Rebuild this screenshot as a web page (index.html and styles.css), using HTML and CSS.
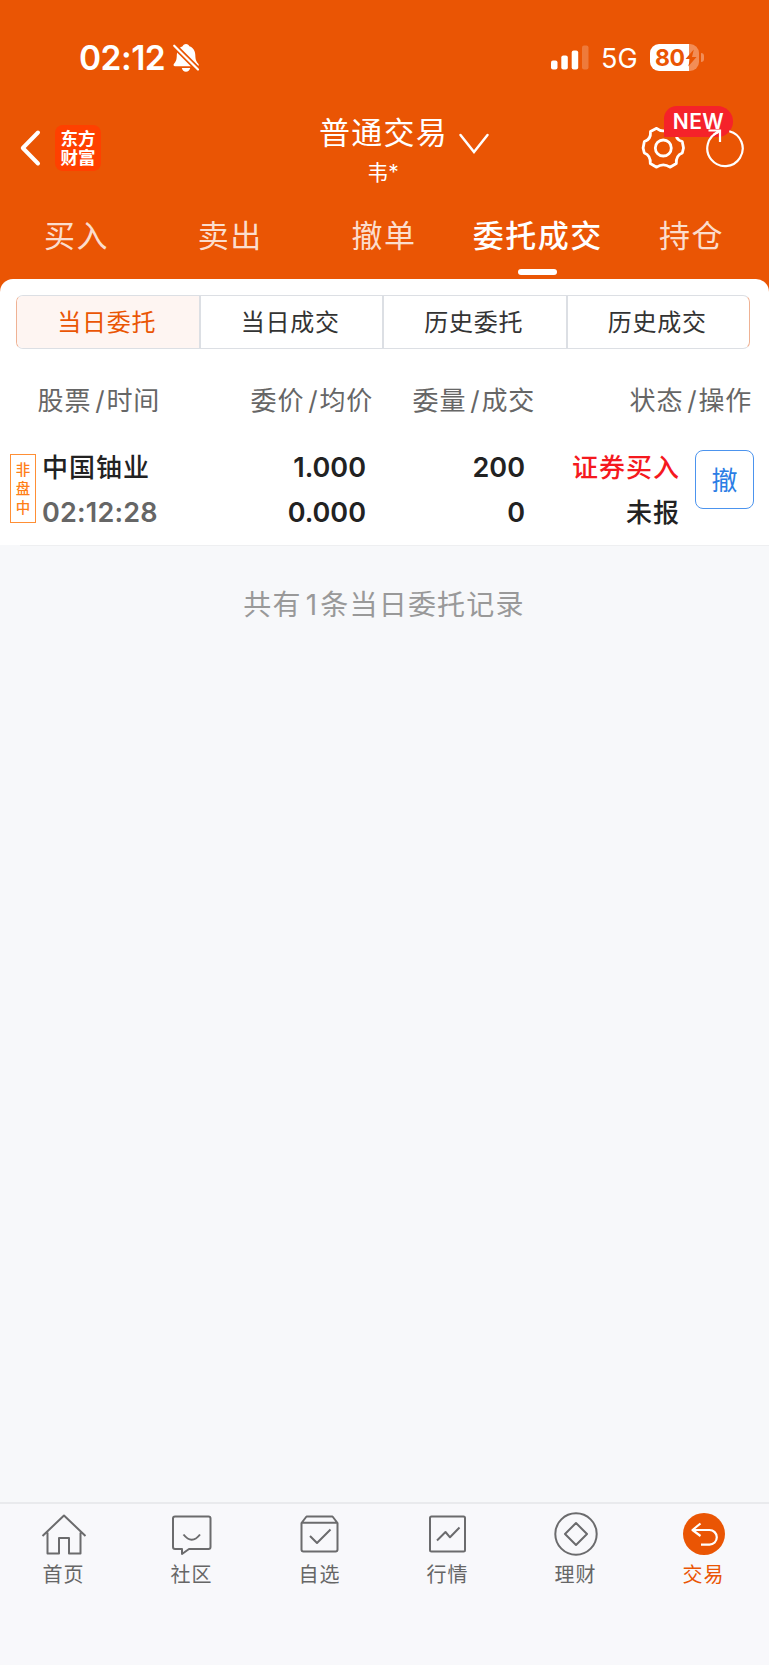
FILE: index.html
```html
<!DOCTYPE html>
<html lang="zh-CN">
<head>
    <meta charset="UTF-8">
    <meta name="viewport" content="width=device-width, initial-scale=1.0">
    <title>普通交易</title>
    <link rel="stylesheet" href="styles.css">
</head>
<body>
    <div class="app">
        <header class="header">
            <div class="status-bar">
                <span class="time">02:12</span>
                <svg class="icon-bell" width="28" height="30" viewBox="0 0 28 30">
                    <path fill="#fff" d="M14 1c1.8 0 3 1 3.400 2.300 3.700 1.300 5.800 4.400 5.900 8.700.1 5.100 1.100 6.600 3 8.700.9 1 .4 2.500-1 2.500H3c-1.400 0-1.900-1.500-1-2.500 1.900-2.100 2.700-3.600 2.800-8.700.1-4.300 2-7.400 5.800-8.700C11 2 12.200 1 14 1zM9.800 25h8.400c-.5 2.300-2.100 3.700-4.200 3.700S10.300 27.300 9.800 25z"/>
                    <path stroke="#ea5504" stroke-width="5.500" d="M0 0.500L28 28.500"/>
                    <path stroke="#fff" stroke-width="2.200" stroke-linecap="round" d="M2.200 2.700L26 26.500"/>
                </svg>
                <svg class="icon-signal" width="38" height="25" viewBox="0 0 38 25">
                    <g fill="#fff">
                        <rect x="0" y="15.500" width="6.500" height="9" rx="2"/>
                        <rect x="10.300" y="10.500" width="6.500" height="14" rx="2"/>
                        <rect x="20.700" y="5.500" width="6.500" height="19" rx="2"/>
                        <rect x="31" y="0.500" width="6.500" height="24" rx="2" opacity="0.22"/>
                    </g>
                </svg>
                <span class="network">5G</span>
                <div class="battery">
                    <span class="battery-level">80</span>
                    <svg width="12" height="18" viewBox="0 0 12 18"><path fill="#ea5504" d="M8.800.5L.5 10h4.600L3.200 17.500 11.500 8H7z"/></svg>
                </div>
                <span class="battery-cap"></span>
            </div>

            <div class="nav-bar">
                <svg class="icon-back" width="22" height="38" viewBox="0 0 22 38"><path fill="none" stroke="#fff" stroke-width="4" stroke-linecap="round" stroke-linejoin="round" d="M19 3.500L3.800 19 19 34.500"/></svg>
                <div class="logo"><span>东方</span><span>财富</span></div>
                <div class="account">
                    <h1 class="account-title">普通交易</h1>
                    <span class="account-name">韦*</span>
                </div>
                <svg class="icon-down" width="32" height="22" viewBox="0 0 32 22"><path fill="none" stroke="#fff" stroke-width="2.500" stroke-linecap="round" d="M2.500 2L16 19 29.500 2"/></svg>
                <div class="settings">
                    <svg width="44" height="44" viewBox="0 0 44 44" fill="none" stroke="#fff" stroke-width="2.800" stroke-linejoin="round">
                        <circle cx="22.300" cy="22" r="8"/>
                        <path d="M15.600 2.300Q22.300 7.500 29 2.300L35.100 5.500Q33.800 13.500 41.300 15.700L42.500 22L41.300 27Q34.800 29.500 35.300 37.500L29 41.200Q22.300 36.500 15.600 41.200L9.300 37.500Q9.800 29.500 3.300 27L2.100 22L3.300 15.700Q10.100 13.500 9.500 5.500Z"/>
                    </svg>
                    <span class="badge">NEW</span>
                </div>
                <svg class="icon-refresh" width="40" height="42" viewBox="0 0 40 42" fill="none" stroke="#fff" stroke-width="2.200">
                    <path d="M24.300 5.200A17.700 17.700 0 1 1 13.500 5.900"/>
                    <path d="M3.500 4.500H15V16M15 4.500L8.500 8.800"/>
                </svg>
            </div>

            <nav class="tabs">
                <a class="tab">买入</a>
                <a class="tab">卖出</a>
                <a class="tab">撤单</a>
                <a class="tab active">委托成交</a>
                <a class="tab">持仓</a>
            </nav>
        </header>

        <section class="panel">
            <div class="segments">
                <a class="segment active">当日委托</a>
                <a class="segment">当日成交</a>
                <a class="segment">历史委托</a>
                <a class="segment">历史成交</a>
            </div>

            <div class="list-head">
                <span>股票<i>/</i>时间</span>
                <span>委价<i>/</i>均价</span>
                <span>委量<i>/</i>成交</span>
                <span>状态<i>/</i>操作</span>
            </div>

            <div class="order">
                <div class="order-tag"><span>非</span><span>盘</span><span>中</span></div>
                <div class="cell stock">
                    <span>中国铀业</span>
                    <span class="num muted">02:12:28</span>
                </div>
                <div class="cell price">
                    <span class="num">1.000</span>
                    <span class="num">0.000</span>
                </div>
                <div class="cell amount">
                    <span class="num">200</span>
                    <span class="num">0</span>
                </div>
                <div class="cell state">
                    <span class="buy">证券买入</span>
                    <span>未报</span>
                </div>
                <button class="cancel-btn">撤</button>
            </div>
        </section>

        <main class="content">
            <p class="summary">共有<span class="count">1</span>条当日委托记录</p>
        </main>

        <footer class="tab-bar">
            <a class="bar-item">
                <svg width="46" height="46" viewBox="0 0 46 46"><path d="M1.500 26L23 5.500 44.500 26M6.500 22.500V43.500H18V28H28V43.500H39.500V22.500"/></svg>
                <span>首页</span>
            </a>
            <a class="bar-item">
                <svg width="46" height="46" viewBox="0 0 46 46"><path d="M6 6.500H39.500Q41.500 6.500 41.500 8.500V37Q41.500 39 39.500 39H20L13 44V39H6Q4 39 4 37V8.500Q4 6.500 6 6.500zM14.500 24.500Q22.800 35 31 24.500"/></svg>
                <span>社区</span>
            </a>
            <a class="bar-item">
                <svg width="46" height="46" viewBox="0 0 46 46"><path d="M4.500 13L9.500 6.500H35.500L40.500 13V39.500Q40.500 41.500 38.500 41.500H6.500Q4.500 41.500 4.500 39.500zM4.500 12.800H40.500M13 26L20 33 33.500 19.500"/></svg>
                <span>自选</span>
            </a>
            <a class="bar-item">
                <svg width="46" height="46" viewBox="0 0 46 46"><rect x="5" y="6.500" width="35" height="35" rx="1.500"/><path d="M12 30.500L20.500 22 25 27.300 34.500 17.500"/></svg>
                <span>行情</span>
            </a>
            <a class="bar-item">
                <svg width="46" height="46" viewBox="0 0 46 46"><circle cx="23" cy="24" r="20.700"/><path d="M23 13L34 24 23 35 12 24z"/></svg>
                <span>理财</span>
            </a>
            <a class="bar-item active">
                <svg width="46" height="46" viewBox="0 0 46 46"><circle class="disc" cx="23" cy="24" r="21"/><path d="M19.500 13.500L11.500 20 19.500 26M12 20H28.500A7.300 7.300 0 0 1 28.500 34.600H20"/></svg>
                <span>交易</span>
            </a>
        </footer>
    </div>
</body>
</html>
```
FILE: styles.css
```css
* {
    box-sizing: border-box;
}

body {
    margin: 0;
    font-family: Inter, "Noto Sans CJK SC", sans-serif;
    color: #222;
    background-color: #f7f8fa;
}

.app {
    display: flex;
    flex-direction: column;
    width: 769px;
    height: 1665px;
    overflow: hidden;
    background-color: #f7f8fa;
}

/* Header */
.header {
    height: 292px;
    margin-bottom: -13px;
    flex-shrink: 0;
    background-color: #ea5504;
    color: #fff;
}

.status-bar {
    display: flex;
    align-items: center;
    height: 115px;
    padding-left: 79px;
}

.time {
    width: 93px;
    font-size: 33.5px;
    font-weight: 600;
    letter-spacing: -0.5px;
    line-height: 40px;
}

.icon-signal {
    margin-left: 351px;
}

.network {
    width: 48px;
    margin: 2px 0 0 12px;
    font-size: 27px;
    line-height: 32px;
}

.battery {
    display: flex;
    align-items: center;
    width: 49px;
    height: 27px;
    margin-left: 1px;
    padding-left: 5px;
    border-radius: 9px;
    background: linear-gradient(90deg, #fff 39px, #f28d57 39px);
}

.battery-level {
    width: 30px;
    font-size: 23px;
    font-weight: 700;
    line-height: 27px;
    letter-spacing: -0.4px;
    margin-top: 1px;
    color: #ea5504;
}

.battery-cap {
    width: 3px;
    height: 9px;
    margin-left: 2px;
    border-radius: 0 4px 4px 0;
    background-color: #f28d57;
}

.nav-bar {
    display: flex;
    align-items: flex-start;
    height: 85px;
    padding-left: 19px;
}

.icon-back {
    margin-top: 14px;
}

.logo {
    display: flex;
    flex-direction: column;
    align-items: center;
    width: 46px;
    height: 46px;
    margin: 10px 0 0 14px;
    padding-top: 4px;
    border-radius: 8px;
    background-color: #ff4000;
    font-size: 17.5px;
    font-weight: 700;
    line-height: 19px;
}

.account {
    display: flex;
    flex-direction: column;
    align-items: center;
    width: 132px;
    margin-left: 217px;
}

.account-title {
    margin: 0 0 0 -1px;
    font-size: 31px;
    font-weight: 400;
    letter-spacing: 1.3px;
    line-height: 36px;
}

.account-name {
    margin: 10px 0 0 -2px;
    font-size: 21px;
    line-height: 24px;
}

.icon-down {
    margin: 18px 0 0 8px;
}

.settings {
    position: relative;
    width: 44px;
    height: 44px;
    margin: 11px 0 0 151px;
}

.badge {
    position: absolute;
    left: 23px;
    top: -20px;
    width: 69px;
    height: 31px;
    border-radius: 13px 16px 16px 0;
    background-color: #f5222a;
    font-size: 21px;
    font-weight: 600;
    letter-spacing: 0.5px;
    line-height: 31px;
    text-align: center;
}

.icon-refresh {
    position: relative;
    margin: 11px 0 0 20px;
}

.tabs {
    display: flex;
    height: 79px;
}

.tab {
    position: relative;
    flex: 1;
    font-size: 31px;
    letter-spacing: 1.5px;
    line-height: 72px;
    text-align: center;
    text-indent: -1px;
    color: #fbddcd;
}

.tab.active {
    font-weight: 500;
    color: #fff;
}

.tab.active::after {
    content: "";
    position: absolute;
    left: 57px;
    bottom: 4px;
    width: 39px;
    height: 6px;
    border-radius: 3px;
    background-color: #fff;
}

/* Order list */
.panel {
    position: relative;
    height: 266px;
    padding-top: 16px;
    flex-shrink: 0;
    border-radius: 13px 13px 0 0;
    background-color: #fff;
}

.segments {
    display: flex;
    width: 734px;
    height: 54px;
    margin-left: 16px;
    border: 1.500px solid #dcdfe4;
    border-left-color: #efb294;
    border-right-color: #efb294;
    border-radius: 7px;
    overflow: hidden;
}

.segment {
    flex: 1;
    font-size: 24px;
    letter-spacing: 0.8px;
    line-height: 54px;
    text-align: center;
    text-indent: -2px;
    color: #333;
}

.segment + .segment {
    border-left: 2px solid #dcdfe4;
}

.segment.active {
    color: #ea5504;
    background-color: #fef5f2;
}

.list-head {
    display: grid;
    grid-template-columns: 160px 213px 162px 217px;
    height: 100px;
    font-size: 26px;
    letter-spacing: 0.8px;
    line-height: 103px;
    text-align: right;
    color: #666;
}

.list-head i {
    margin: 0 1px 0 4px;
    font-style: normal;
}

.order {
    display: flex;
    align-items: flex-start;
    padding-left: 10px;
    margin-top: -4px;
}

.order-tag {
    display: flex;
    flex-direction: column;
    align-items: center;
    width: 26px;
    height: 69px;
    margin-top: 9px;
    padding-top: 5px;
    border: 1px solid #ff8f35;
    font-size: 14.5px;
    font-weight: 500;
    line-height: 19px;
    color: #ff7f17;
}

.cell {
    display: flex;
    flex-direction: column;
    font-size: 26px;
    font-weight: 500;
    letter-spacing: 1px;
    line-height: 45px;
    text-align: right;
}

.num {
    font-size: 27px;
    font-weight: 600;
    letter-spacing: 0;
}

.muted {
    letter-spacing: 0.2px;
    color: #666;
}

.stock {
    width: 130px;
    margin-left: 6px;
    text-align: left;
}

.price {
    width: 194px;
}

.amount {
    width: 159px;
}

.state {
    width: 155px;
}

.buy {
    color: #f5191e;
}

.cancel-btn {
    width: 59px;
    height: 59px;
    margin: 5px 0 0 15px;
    padding: 0 0 2px;
    border: 1.500px solid #4c94ee;
    border-radius: 8px;
    background: none;
    font-family: inherit;
    font-size: 26px;
    color: #2b7de5;
}

/* Empty area */
.content {
    flex: 1;
    margin-left: 20px;
    border-top: 1px solid #eeeff1;
}

.summary {
    width: 728px;
    margin: 38px 0 0;
    font-size: 28px;
    letter-spacing: 1.2px;
    line-height: 42px;
    text-align: center;
    color: #999;
}

.count {
    margin: 0 2px 0 4px;
}

/* Bottom bar */
.tab-bar {
    display: flex;
    height: 163px;
    padding-top: 6px;
    flex-shrink: 0;
    border-top: 2px solid #e9eaed;
    background-color: #f8f8fb;
}

.bar-item {
    display: flex;
    flex-direction: column;
    align-items: center;
    width: 128px;
    font-size: 20px;
    letter-spacing: 1px;
    line-height: 30px;
    color: #666;
}

.bar-item svg {
    fill: none;
    stroke: #6b6b6d;
    stroke-width: 2;
    stroke-linejoin: round;
}

.bar-item span {
    margin: 4px 0 0 -1px;
}

.bar-item.active {
    color: #ea5504;
}

.bar-item.active svg {
    stroke: #fff;
    stroke-width: 2.200;
}

.bar-item .disc {
    fill: #ea5504;
    stroke: none;
}
```
